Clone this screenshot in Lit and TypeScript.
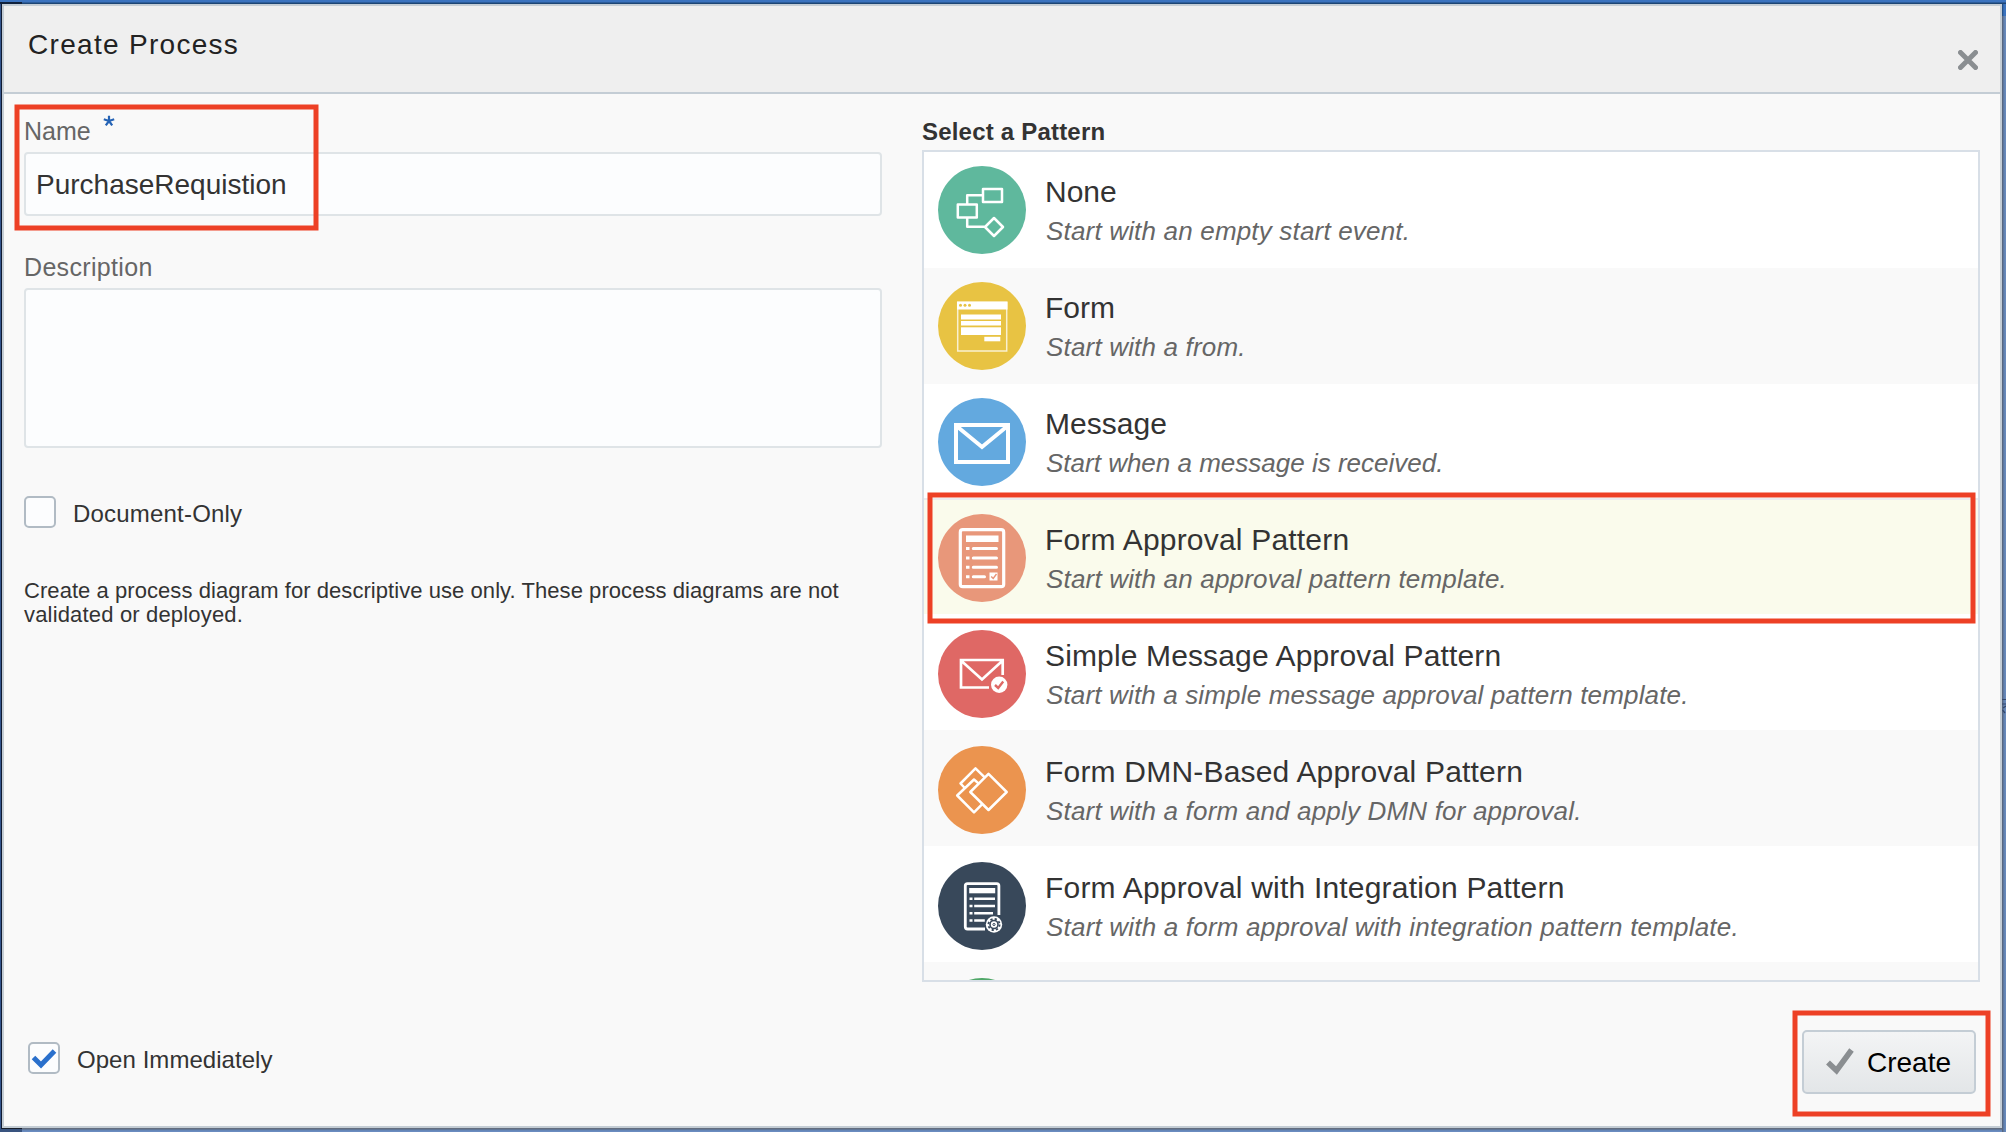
import { LitElement, html, css, svg } from "lit";
import { customElement } from "lit/decorators.js";
import { styleMap } from "lit/directives/style-map.js";

const W = "#fff";

const icons: Record<string, unknown> = {
  none: svg`<g fill="none" stroke="${W}" stroke-width="2.5" stroke-linejoin="round">
    <rect x="45" y="23" width="19" height="13"/><rect x="19.8" y="38.5" width="19" height="13"/>
    <path d="M45 29.2H29.2V38.5M29.2 51.5V60.8H47M56 52L65 61L56 70L47 61Z"/></g>`,
  form: svg`<g fill="${W}"><rect x="19.7" y="20.5" width="49" height="48.5" fill="none" stroke="${W}" stroke-opacity=".75" stroke-width="1.5"/>
    <rect x="19" y="19.5" width="50.5" height="8"/><rect x="23" y="32.5" width="40" height="5"/><rect x="23" y="39" width="40" height="4.5"/>
    <rect x="23" y="45.3" width="40" height="7.7"/><rect x="46.3" y="54.8" width="16" height="4.5"/></g>
    <g fill="#e8c343"><circle cx="22.5" cy="23.3" r="1.5"/><circle cx="27" cy="23.3" r="1.5"/><circle cx="31.5" cy="23.3" r="1.5"/></g>`,
  message: svg`<g fill="none" stroke="${W}" stroke-width="4"><rect x="18" y="27" width="52" height="37"/><path d="M18.5 28L44 49L69.5 28"/></g>`,
  approval: svg`<rect x="22.3" y="15.7" width="43.4" height="57" rx="2.5" fill="none" stroke="${W}" stroke-width="3.2"/>
    <rect x="28" y="21.5" width="32.5" height="6.5" fill="${W}"/>
    <g stroke="${W}" stroke-width="3"><path d="M28 34.5H31.5M28 44H31.5M28 53.3H31.5M28 62.7H31.5"/><path d="M35.3 34.5H58.5M35.3 44H58.5M35.3 53.3H58.5M35.3 62.7H46.5" stroke-linecap="round"/></g>
    <rect x="51.5" y="58.5" width="8" height="8" fill="${W}"/><path d="M53.2 62.5L55.2 64.5L58.5 60" fill="none" stroke="#e8957a" stroke-width="1.4"/>`,
  mail: svg`<g fill="none" stroke="${W}" stroke-width="2.7"><path d="M51 57.5H23V30H64.7V45M23.5 31L44 49.5L64.2 31"/></g>
    <circle cx="61.2" cy="54.8" r="8.2" fill="${W}"/><path d="M57 55L60.2 58L65.2 51.5" fill="none" stroke="#df6865" stroke-width="2.4"/>`,
  dmn: svg`<g fill="none" stroke="${W}" stroke-width="2.5" stroke-linejoin="round"><path d="M50.5 27.8L68.7 46L50.5 64L32.3 46Z"/>
    <path d="M44.5 57.8L36 66.3L19.2 49.5L36 33.5L40.8 37.6M26.8 42L22.5 37.5L37.5 22.3L46.7 31.3"/></g>`,
  integration: svg`<path d="M47 67H29.5Q27.3 67 27.3 64.8V23.8Q27.3 21.6 29.5 21.6H58.7Q60.9 21.6 60.9 23.8V53" fill="none" stroke="${W}" stroke-width="2.8"/>
    <rect x="31.2" y="26" width="26" height="5.3" fill="${W}"/>
    <g stroke="${W}" stroke-width="2.5"><path d="M31.5 36.7H34.5M31.5 44H34.5M31.5 51.3H34.5M31.5 58.5H34.5M36.2 36.7H57M36.2 44H57M36.2 51.3H55M36.2 58.5H46.8"/></g>
    <circle cx="56" cy="62.5" r="8.2" fill="${W}"/>
    <g fill="none" stroke="#38485a"><circle cx="56" cy="62.5" r="5.6" stroke-width="1.8" stroke-dasharray="2.2 2.2"/><circle cx="56" cy="62.5" r="4" stroke-width="1.6"/><circle cx="56" cy="62.5" r="1.1" stroke-width="1"/></g>`,
  blank: svg``,
};

interface Pattern { icon: string; color: string; title: string; text: string; ts: number; ds: number; cls?: string; }

// ts and ds are the tracking, in px, of the title and the description.
const patterns: Pattern[] = [
  { icon: "none", color: "#5fb89d", title: "None", text: "Start with an empty start event.", ts: 0, ds: 0.18, cls: "early" },
  { icon: "form", color: "#e8c343", title: "Form", text: "Start with a from.", ts: 0, ds: 0.18, cls: "early shade" },
  { icon: "message", color: "#63a9df", title: "Message", text: "Start when a message is received.", ts: 0.05, ds: 0, cls: "early short" },
  { icon: "approval", color: "#e8977a", title: "Form Approval Pattern", text: "Start with an approval pattern template.", ts: 0.2, ds: 0.18, cls: "selected" },
  { icon: "mail", color: "#df6865", title: "Simple Message Approval Pattern", text: "Start with a simple message approval pattern template.", ts: 0.14, ds: 0.15 },
  { icon: "dmn", color: "#eb944f", title: "Form DMN-Based Approval Pattern", text: "Start with a form and apply DMN for approval.", ts: 0.2, ds: 0.18, cls: "shade" },
  { icon: "integration", color: "#38485a", title: "Form Approval with Integration Pattern", text: "Start with a form approval with integration pattern template.", ts: 0.2, ds: 0.2 },
  { icon: "blank", color: "#4fa768", title: "", text: "", ts: 0, ds: 0, cls: "shade" },
];

const tracking = (px: number) => styleMap({ letterSpacing: `${px}px` });

@customElement("app-root")
export class AppRoot extends LitElement {
  static styles = css`
    :host { display: block; width: 2006px; height: 1132px; font-family: "Liberation Sans", Arial, sans-serif; color: #333; overflow: hidden; position: relative; }
    * { box-sizing: border-box; }
    .backdrop { width: 2006px; height: 1132px; padding: 4px 4px 4px 2px; background:
      linear-gradient(#10213c, #10213c) 0 2px / 22px 2px no-repeat,
      linear-gradient(#3b73bf 0 2px, #1d4574 3px 4px) 0 0 / 100% 4px no-repeat,
      linear-gradient(90deg, #33558e 0 1px, #111b31 1px 2px) 0 4px / 2px 1125px no-repeat,
      linear-gradient(#171d29 0 1px, #39547f 1px 4px) 0 1128px / 22px 4px no-repeat,
      linear-gradient(#646e7f 0 1px, #6080ae 2px, #6a8cc0 3px) 0 1128px / 2002px 4px no-repeat,
      linear-gradient(90deg, #1d4574, #3b73bf 2px) 2002px 0 / 4px 16px no-repeat,
      linear-gradient(90deg, #555e70, #6080ae 2px, #6a8cc0) 2002px 16px / 4px 1116px no-repeat; }
    .dialog { width: 2000px; height: 1124px; border: 2px solid #c4cdd5; background: #f9f9f9; display: flex; flex-direction: column; }
    .header { height: 88px; flex: none; border-bottom: 2px solid #c4cdd5; background: #efefef; display: flex; justify-content: space-between; padding: 22px 22px 0 24px; }
    .title { font-size: 28px; line-height: 32px; letter-spacing: 1.3px; color: #222; white-space: nowrap; padding-top: 1px; }
    .close { width: 20px; height: 20px; margin-top: 22px; }
    svg { display: block; }
    .content { display: flex; height: 888px; padding: 0 20px; gap: 40px; flex: none; }
    .left { width: 858px; display: flex; flex-direction: column; }
    .label { font-size: 25px; line-height: 28px; color: #666; display: flex; white-space: nowrap; }
    .name { margin-top: 23px; }
    .star { margin: -2px 0 0 11px; width: 14px; height: 28px; }
    .input { height: 64px; margin-top: 7px; border: 2px solid #dfe4e7; border-radius: 4px; background: #fcfdfe; font-size: 28px; line-height: 62px; padding-left: 10px; }
    .desc { margin-top: 37px; letter-spacing: 0.33px; }
    .area { height: 160px; margin-top: 7px; border: 2px solid #dfe4e7; border-radius: 4px; background: #fcfdfe; }
    .check { display: flex; align-items: center; font-size: 24px; line-height: 28px; white-space: nowrap; }
    .check span { padding-top: 3px; }
    .box { width: 32px; height: 32px; border: 2px solid #b1bbc4; border-radius: 5px; background: #fcfdfe; margin-right: 17px; }
    .doc { margin-top: 48px; height: 32px; letter-spacing: 0.2px; }
    .hint { margin-top: 51px; font-size: 22px; line-height: 24px; white-space: nowrap; letter-spacing: 0.06px; }
    .hint2 { letter-spacing: 0.17px; }
    .right { width: 1058px; display: flex; flex-direction: column; }
    .heading { font-size: 24px; line-height: 28px; font-weight: bold; margin-top: 24px; letter-spacing: 0.2px; }
    .list { height: 832px; margin-top: 4px; border: 2px solid #d8dfe7; background: #fff; overflow: hidden; }
    .row { height: 116px; padding: 16px 14px 0; display: flex; gap: 19px; }
    .early { padding-top: 14px; }
    .short { height: 114px; }
    .shade { background: #f9f9f9; }
    .selected { background: #fafbec; border-top: 2px solid #ececee; padding-top: 14px; }
    .texts { display: flex; flex-direction: column; padding-top: 9px; white-space: nowrap; }
    .ptitle { font-size: 30px; line-height: 34px; }
    .ptext { font-size: 26px; line-height: 30px; font-style: italic; color: #666; margin: 7px 0 0 1px; }
    .footer { display: flex; justify-content: space-between; padding: 48px 24px 0 24px; }
    .open { margin-top: 12px; height: 32px; letter-spacing: 0.05px; }
    .button { width: 174px; height: 64px; border: 2px solid #c4cdd5; border-radius: 5px; background: linear-gradient(#f3f4f5, #e3e6e8); font-size: 28px; line-height: 62px; color: #000; display: flex; padding-left: 22px; white-space: nowrap; }
    .button svg { margin: 16px 13px 0 0; }
    .marks { position: absolute; left: 0; top: 0; }
  `;

  render() {
    return html`
      <div class="backdrop">
        <div class="dialog">
          <div class="header">
            <div class="title">Create Process</div>
            <svg class="close" viewBox="0 0 20 20"><path d="M2.5 2.5L17.5 17.5M17.5 2.5L2.5 17.5" stroke="#8a8e91" stroke-width="5" stroke-linecap="round"/></svg>
          </div>
          <div class="content">
            <div class="left">
              <div class="label name"><span>Name</span>
                <svg class="star" viewBox="0 0 14 28"><path d="M7 6V0.8M7 6L1.8 4.3M7 6L12.2 4.3M7 6L3.8 10.3M7 6L10.2 10.3" stroke="#2563b5" stroke-width="2.2"/></svg>
              </div>
              <div class="input">PurchaseRequistion</div>
              <div class="label desc"><span>Description</span></div>
              <div class="area"></div>
              <div class="check doc"><div class="box"></div><span>Document-Only</span></div>
              <div class="hint">Create a process diagram for descriptive use only. These process diagrams are not<br><span class="hint2">validated or deployed.</span></div>
            </div>
            <div class="right">
              <div class="heading">Select a Pattern</div>
              <div class="list">
                ${patterns.map((p) => html`
                  <div class="row ${p.cls ?? ""}">
                    <svg width="88" height="88" viewBox="0 0 88 88"><circle cx="44" cy="44" r="44" fill=${p.color}/>${icons[p.icon]}</svg>
                    <div class="texts"><div class="ptitle" style=${tracking(p.ts)}>${p.title}</div><div class="ptext" style=${tracking(p.ds)}>${p.text}</div></div>
                  </div>`)}
              </div>
            </div>
          </div>
          <div class="footer">
            <div class="check open"><div class="box"><svg width="28" height="28" viewBox="0 0 28 28"><path d="M3.5 13.5L11 21L24.5 7" fill="none" stroke="#2a70cc" stroke-width="5"/></svg></div><span>Open Immediately</span></div>
            <div class="button"><svg width="28" height="28" viewBox="0 0 28 28"><path d="M2 14.5L10.5 22.5L25.5 2" fill="none" stroke="#8a8e91" stroke-width="5.6"/></svg><span>Create</span></div>
          </div>
        </div>
      </div>
      <svg class="marks" width="2006" height="1132"><g fill="none" stroke="#ed4025" stroke-width="5">
        <rect x="17" y="107" width="299" height="121"/><rect x="930" y="495" width="1043" height="126"/><rect x="1795" y="1013" width="193" height="101"/></g>
        <path d="M2002 699.5H2006M2002 704H2006M2003 708L2006 706M2002.5 710L2005 713" fill="none" stroke="#34486c" stroke-width="1.2"/></svg>`;
  }
}
